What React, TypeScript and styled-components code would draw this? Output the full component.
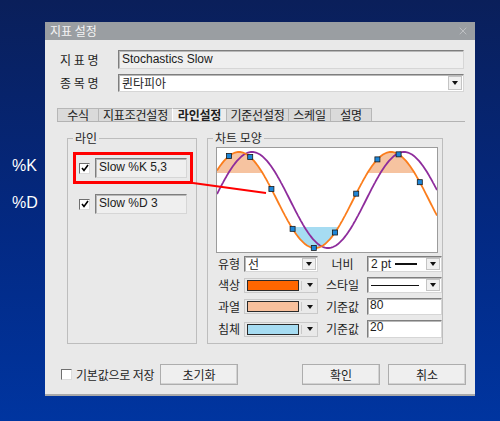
import React from "react";
import styled, { createGlobalStyle } from "styled-components";
import { X } from "lucide-react";

const GlobalStyle = createGlobalStyle`
  html, body {
    margin: 0;
    padding: 0;
  }
  body {
    width: 500px;
    height: 421px;
    overflow: hidden;
    background: linear-gradient(180deg, #0a1f5a 0%, #032983 55%, #0035a0 100%);
    font-family: "Noto Sans CJK KR", "Liberation Sans", sans-serif;
  }
`;

const Page = styled.div`
  position: relative;
  display: flex;
  width: 500px;
  height: 421px;
  padding-top: 22px;
  box-sizing: border-box;
`;

const Side = styled.div`
  width: 45px;
  box-sizing: border-box;
  padding: 134px 0 0 12px;
  display: flex;
  flex-direction: column;
  gap: 17px;
`;

const SideLabel = styled.div`
  font-family: "Liberation Sans", Arial, sans-serif;
  font-size: 16px;
  line-height: 20px;
  color: #ffffff;
`;

const Dialog = styled.div`
  width: 430px;
  height: 372px;
  background: #e9e9e9;
  display: flex;
  flex-direction: column;
  box-shadow: 0 2px 0 #a9a9a9;
  font-size: 12px;
  color: #1e1e1e;
`;

const TitleBar = styled.div`
  height: 18px;
  background: #9a9ea2;
  display: flex;
  align-items: center;
  justify-content: space-between;
  padding: 0 6px 0 5px;
  color: #f4f4f4;
  font-size: 12px;
  line-height: 18px;
`;

const Fields = styled.div`
  display: grid;
  grid-template-columns: 58px 1fr;
  grid-template-rows: 19px 18px;
  row-gap: 5px;
  padding: 10px 11px 0 15px;
  align-items: center;
`;

const FieldLabel = styled.div`
  font-size: 12px;
  line-height: 16px;
  white-space: pre;
`;

const sunken = `
  box-sizing: border-box;
  border: 1px solid;
  border-color: #7e7e7e #d6d6d6 #d6d6d6 #7e7e7e;
  box-shadow: inset 1px 1px 0 #b8b8b8;
`;

const ReadBox = styled.div<{ $w?: number; $h?: number }>`
  ${sunken}
  width: ${(p) => (p.$w ? `${p.$w}px` : "100%")};
  height: ${(p) => p.$h ?? 19}px;
  background: #efefef;
  padding-left: 3px;
  font-family: "Liberation Sans", Arial, sans-serif;
  font-size: 12px;
  line-height: 17px;
  color: #202020;
  white-space: nowrap;
`;

const Combo = styled.div<{ $h?: number }>`
  ${sunken}
  display: flex;
  height: ${(p) => p.$h ?? 18}px;
  background: #ffffff;
  align-items: stretch;
`;

const ComboText = styled.div`
  flex: 1;
  display: flex;
  align-items: center;
  gap: 4px;
  padding-left: 3px;
  font-size: 12px;
  line-height: 12px;
  white-space: nowrap;
`;

const LatinText = styled.span`
  font-family: "Liberation Sans", Arial, sans-serif;
  font-size: 12px;
`;

const StrokeSample = styled.span<{ $w: number; $t: number }>`
  display: inline-block;
  width: ${(p) => p.$w}px;
  height: 0;
  border-top: ${(p) => p.$t}px solid #111;
`;

const ArrowBtn = styled.div`
  width: 14px;
  margin: 1px;
  background: #f0f0f0;
  border: 1px solid #c4c4c4;
  box-sizing: border-box;
  display: flex;
  align-items: center;
  justify-content: center;
`;

const Tri = styled.span`
  width: 0;
  height: 0;
  border-left: 3px solid transparent;
  border-right: 3px solid transparent;
  border-top: 4px solid #111;
`;

const Tabs = styled.div`
  display: flex;
  margin: 16px 10px 0 12px;
  border-bottom: 1px solid #b3b3b3;
`;

const Tab = styled.div<{ $w: number; $active?: boolean }>`
  width: ${(p) => p.$w}px;
  height: 13px;
  box-sizing: border-box;
  border: 1px solid #b7b7b7;
  border-bottom: none;
  border-left-color: ${(p) => (p.$active ? "#ffffff" : "#b7b7b7")};
  margin-right: -1px;
  background: ${(p) => (p.$active ? "#ececec" : "#dadada")};
  font-weight: ${(p) => (p.$active ? 700 : 400)};
  font-size: 12px;
  letter-spacing: -0.2px;
  line-height: 12px;
  text-align: center;
  color: #202020;
`;

const Panel = styled.div`
  display: flex;
  gap: 10px;
  padding-left: 22px;
  margin-top: 9px;
`;

const Group = styled.fieldset<{ $w: number }>`
  margin: 0;
  padding: 0;
  width: ${(p) => p.$w}px;
  height: 213px;
  box-sizing: border-box;
  border: 1px solid #bdbdbd;
  min-inline-size: 0;
`;

const Legend = styled.legend`
  margin-left: 5px;
  padding: 0 2px;
  font-size: 12px;
  line-height: 14px;
  color: #262626;
`;

const LineRow = styled.div<{ $hl?: boolean; $top: number }>`
  display: flex;
  align-items: center;
  gap: 5px;
  width: 120px;
  height: 32px;
  box-sizing: border-box;
  padding: 3px;
  margin: ${(p) => p.$top}px 0 0 5px;
  border: 3px solid ${(p) => (p.$hl ? "#ff0000" : "transparent")};
`;

const Check = styled.span`
  width: 11px;
  height: 11px;
  flex: none;
  box-sizing: border-box;
  background: #ffffff;
  border: 1px solid;
  border-color: #6f6f6f #dcdcdc #dcdcdc #6f6f6f;
  display: flex;
  align-items: center;
  justify-content: center;
`;

const ChartFrame = styled.div`
  width: 222px;
  height: 106px;
  box-sizing: border-box;
  margin: 2px 0 0 8px;
  border: 1px solid #9c9c9c;
  background: #ffffff;
`;

const Controls = styled.div`
  display: grid;
  grid-template-columns: 26px 74px 49px 75px;
  grid-template-rows: 16px 16px 17px 18px;
  row-gap: 5px;
  margin-top: 3px;
  padding-left: 10px;
  align-items: stretch;
`;

const CtlLabel = styled.div<{ $center?: boolean }>`
  display: flex;
  align-items: center;
  justify-content: ${(p) => (p.$center ? "center" : "flex-start")};
  font-size: 12px;
  line-height: 14px;
  white-space: nowrap;
`;

const ColorPicker = styled.div`
  display: flex;
  align-items: center;
  box-sizing: border-box;
  border: 1px solid #c9c9c9;
  padding: 2px 0 2px 2px;
  height: 15px;
  align-self: center;
`;

const Swatch = styled.span<{ $c: string }>`
  width: 52px;
  height: 11px;
  box-sizing: border-box;
  border: 1px solid #2a2a2a;
  background: ${(p) => p.$c};
`;

const PickArrow = styled.span`
  flex: 1;
  height: 100%;
  border-left: 1px solid #c9c9c9;
  margin-left: 2px;
  display: flex;
  align-items: center;
  justify-content: center;
`;

const ValueBox = styled.div`
  ${sunken}
  background: #ffffff;
  padding: 0 2px;
  font-family: "Liberation Sans", Arial, sans-serif;
  font-size: 12px;
  line-height: 13px;
`;

const Footer = styled.div`
  display: flex;
  align-items: center;
  height: 21px;
  margin-top: 20px;
  padding: 0 9px 0 16px;
`;

const CheckLabel = styled.label`
  width: 99px;
  display: flex;
  align-items: center;
  gap: 4px;
  font-size: 12px;
  letter-spacing: -0.2px;
  line-height: 14px;
  white-space: nowrap;
`;

const Spacer = styled.div`
  flex: 1;
`;

const Button = styled.button<{ $gap?: number }>`
  width: 78px;
  height: 21px;
  margin: 0 0 0 ${(p) => p.$gap ?? 0}px;
  padding: 0;
  background: #efefef;
  border: 1px solid #adadad;
  box-shadow: inset -1px -1px 0 #d2d2d2;
  font-family: "Noto Sans CJK KR", sans-serif;
  font-size: 12px;
  line-height: 14px;
  color: #1e1e1e;
`;

const Annot = styled.svg`
  position: absolute;
  left: 0;
  top: 0;
  pointer-events: none;
`;

const W = 220;
const H = 104;
const HIGH = 25;
const LOW = 79;
const orange = (x: number) => 52 - 48 * Math.cos((2 * Math.PI * (x - 22)) / 152);
const purple = (x: number) => 52 - 48 * Math.cos((2 * Math.PI * (x - 35)) / 152);
const xs = Array.from({ length: W + 1 }, (_, i) => i);
const curve = (f: (x: number) => number) =>
  xs.map((x, i) => `${i ? "L" : "M"}${x},${f(x).toFixed(1)}`).join(" ");
const overArea =
  `M0,${HIGH} ` +
  xs.map((x) => `L${x},${Math.min(orange(x), HIGH).toFixed(1)}`).join(" ") +
  ` L${W},${HIGH} Z`;
const underArea =
  `M0,${LOW} ` +
  xs.map((x) => `L${x},${Math.max(orange(x), LOW).toFixed(1)}`).join(" ") +
  ` L${W},${LOW} Z`;
const markers = Array.from({ length: 10 }, (_, i) => 12 + i * 21.2);

const tabs = [
  { label: "수식", w: 42 },
  { label: "지표조건설정", w: 75 },
  { label: "라인설정", w: 55, active: true },
  { label: "기준선설정", w: 63 },
  { label: "스케일", w: 43 },
  { label: "설명", w: 42 },
];

const CheckMark = () => (
  <svg width="8" height="8" viewBox="0 0 8 8">
    <polyline points="1,4 3,6.5 7,1" fill="none" stroke="#000" strokeWidth="1.6" />
  </svg>
);

const Arrow = () => (
  <ArrowBtn>
    <Tri />
  </ArrowBtn>
);

const Chart = () => (
  <svg width={W} height={H} viewBox={`0 0 ${W} ${H}`}>
    <path d={overArea} fill="#f6c3a0" />
    <path d={underArea} fill="#a6dcf2" />
    <path d={curve(purple)} fill="none" stroke="#8e2c9c" strokeWidth="1.8" />
    <path d={curve(orange)} fill="none" stroke="#fb7d1c" strokeWidth="1.8" />
    {markers.map((x) => (
      <rect
        key={x}
        x={x - 2.5}
        y={orange(x) - 2.5}
        width="5"
        height="5"
        fill="#1d86d8"
        stroke="#1a1a1a"
        strokeWidth="0.8"
      />
    ))}
  </svg>
);

export default function App() {
  return (
    <>
      <GlobalStyle />
      <Page>
        <Side>
          <SideLabel>%K</SideLabel>
          <SideLabel>%D</SideLabel>
        </Side>
        <Dialog>
          <TitleBar>
            <span>지표 설정</span>
            <X size={12} color="#c9cbce" strokeWidth={1.5} />
          </TitleBar>

          <Fields>
            <FieldLabel>지 표 명</FieldLabel>
            <ReadBox>Stochastics Slow</ReadBox>
            <FieldLabel>종 목 명</FieldLabel>
            <Combo>
              <ComboText>퀸타피아</ComboText>
              <Arrow />
            </Combo>
          </Fields>

          <Tabs>
            {tabs.map((t) => (
              <Tab key={t.label} $w={t.w} $active={t.active}>
                {t.label}
              </Tab>
            ))}
          </Tabs>

          <Panel>
            <Group $w={130}>
              <Legend>라인</Legend>
              <LineRow $hl $top={7}>
                <Check>
                  <CheckMark />
                </Check>
                <ReadBox $w={95} $h={20}>
                  Slow %K 5,3
                </ReadBox>
              </LineRow>
              <LineRow $top={4}>
                <Check>
                  <CheckMark />
                </Check>
                <ReadBox $w={95} $h={20}>
                  Slow %D 3
                </ReadBox>
              </LineRow>
            </Group>

            <Group $w={236}>
              <Legend>차트 모양</Legend>
              <ChartFrame>
                <Chart />
              </ChartFrame>
              <Controls>
                <CtlLabel>유형</CtlLabel>
                <Combo $h={16}>
                  <ComboText>선</ComboText>
                  <Arrow />
                </Combo>
                <CtlLabel $center>너비</CtlLabel>
                <Combo $h={16}>
                  <ComboText>
                    <LatinText>2 pt</LatinText>
                    <StrokeSample $w={22} $t={2} />
                  </ComboText>
                  <Arrow />
                </Combo>

                <CtlLabel>색상</CtlLabel>
                <ColorPicker>
                  <Swatch $c="#ff6600" />
                  <PickArrow>
                    <Tri />
                  </PickArrow>
                </ColorPicker>
                <CtlLabel $center>스타일</CtlLabel>
                <Combo $h={16}>
                  <ComboText>
                    <StrokeSample $w={48} $t={1} />
                  </ComboText>
                  <Arrow />
                </Combo>

                <CtlLabel>과열</CtlLabel>
                <ColorPicker>
                  <Swatch $c="#f8c09c" />
                  <PickArrow>
                    <Tri />
                  </PickArrow>
                </ColorPicker>
                <CtlLabel $center>기준값</CtlLabel>
                <ValueBox>80</ValueBox>

                <CtlLabel>침체</CtlLabel>
                <ColorPicker>
                  <Swatch $c="#a6dcf2" />
                  <PickArrow>
                    <Tri />
                  </PickArrow>
                </ColorPicker>
                <CtlLabel $center>기준값</CtlLabel>
                <ValueBox>20</ValueBox>
              </Controls>
            </Group>
          </Panel>

          <Footer>
            <CheckLabel>
              <Check />
              기본값으로 저장
            </CheckLabel>
            <Button>초기화</Button>
            <Spacer />
            <Button>확인</Button>
            <Button $gap={8}>취소</Button>
          </Footer>
        </Dialog>
        <Annot width="500" height="421">
          <line x1="193" y1="183" x2="266" y2="193" stroke="#ff0000" strokeWidth="2" />
        </Annot>
      </Page>
    </>
  );
}
